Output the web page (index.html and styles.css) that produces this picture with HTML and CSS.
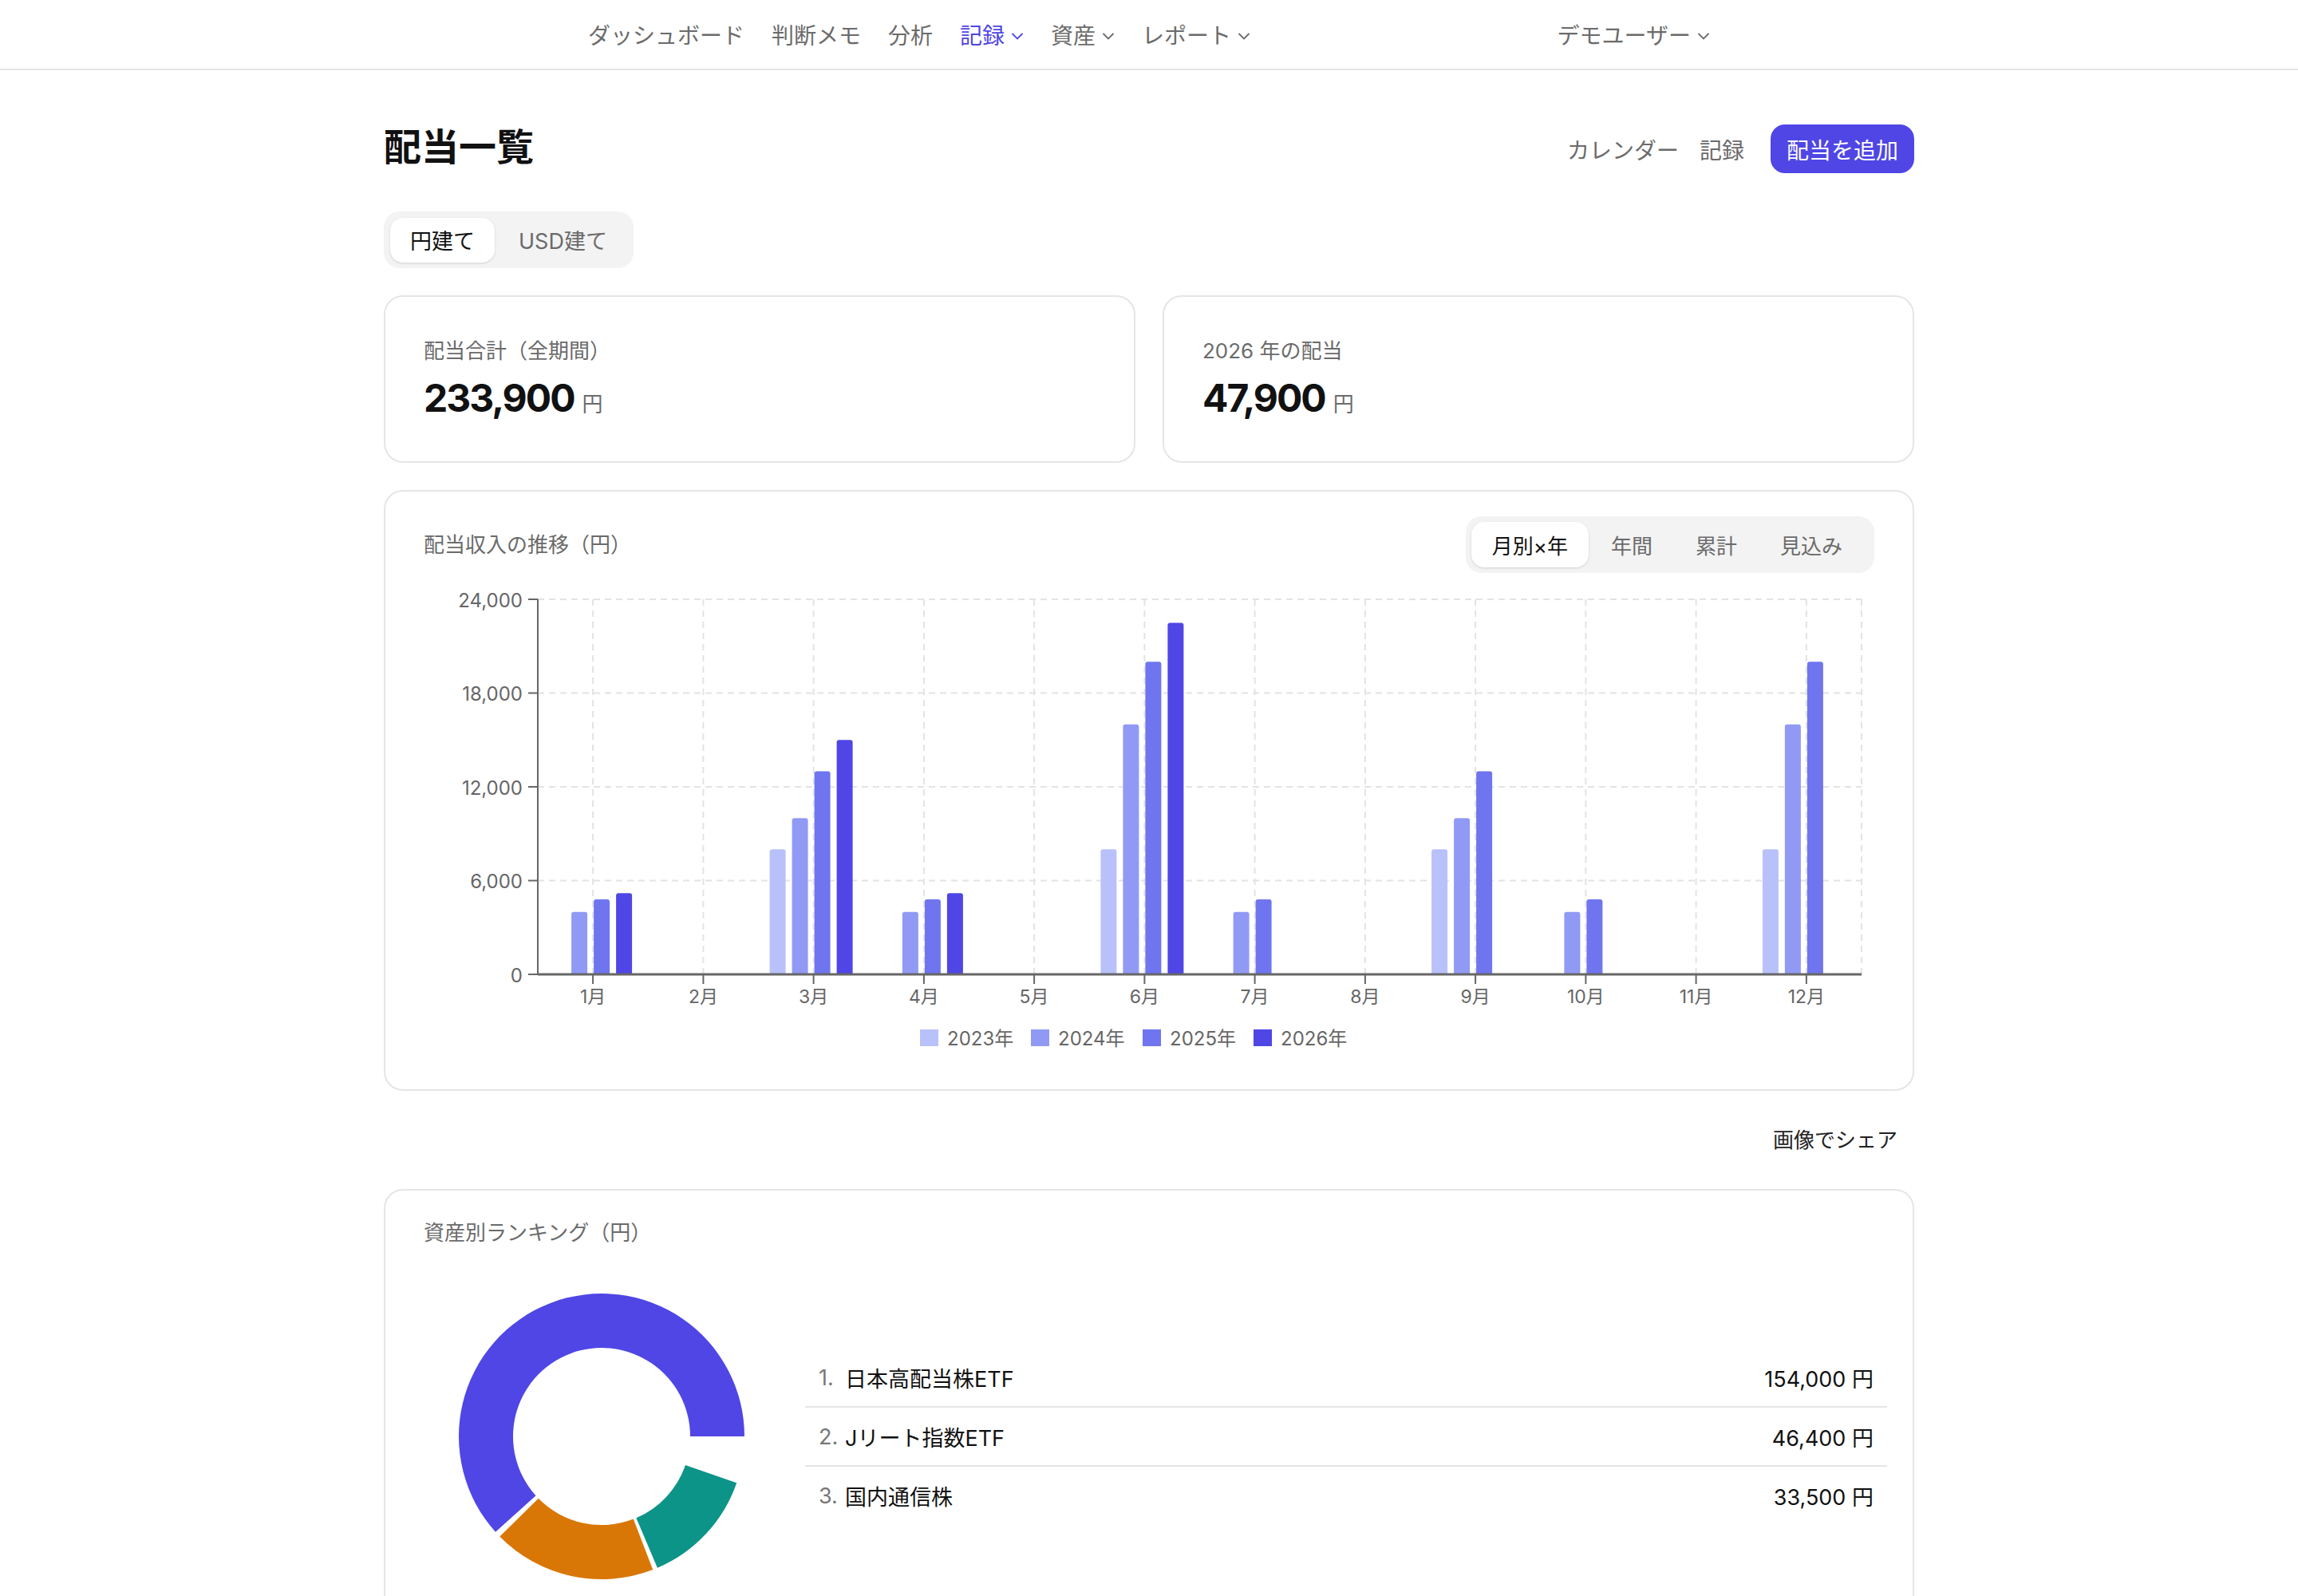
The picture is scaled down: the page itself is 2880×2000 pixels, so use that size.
FILE: index.html
```html
<!DOCTYPE html>
<html lang="ja">
<head>
    <meta charset="UTF-8">
    <meta name="viewport" content="width=device-width, initial-scale=1.0">
    <title>配当一覧</title>
    <link rel="stylesheet" href="styles.css">
</head>
<body>
    <header class="site-header">
        <div class="header-inner">
            <nav class="main-nav">
                <a href="#">ダッシュボード</a>
                <a href="#">判断メモ</a>
                <a href="#">分析</a>
                <a href="#" class="active">記録<svg class="chev" viewBox="0 0 16 10"><path d="M1.5 2l6.5 6.5 6.5-6.5"/></svg></a>
                <a href="#">資産<svg class="chev" viewBox="0 0 16 10"><path d="M1.5 2l6.5 6.5 6.5-6.5"/></svg></a>
                <a href="#">レポート<svg class="chev" viewBox="0 0 16 10"><path d="M1.5 2l6.5 6.5 6.5-6.5"/></svg></a>
            </nav>
            <div class="user-menu">デモユーザー<svg class="chev" viewBox="0 0 16 10"><path d="M1.5 2l6.5 6.5 6.5-6.5"/></svg></div>
        </div>
    </header>

    <main class="page">
        <div class="title-row">
            <h1 class="page-title">配当一覧</h1>
            <div class="title-actions">
                <a href="#" class="text-link">カレンダー</a>
                <a href="#" class="text-link">記録</a>
                <button class="primary-btn">配当を追加</button>
            </div>
        </div>

        <div class="seg currency-seg">
            <span class="seg-item active">円建て</span>
            <span class="seg-item">USD建て</span>
        </div>

        <div class="stat-grid">
            <div class="card stat-card">
                <div class="stat-label">配当合計（全期間）</div>
                <div class="stat-value">233,900<span class="unit">円</span></div>
            </div>
            <div class="card stat-card">
                <div class="stat-label">2026 年の配当</div>
                <div class="stat-value">47,900<span class="unit">円</span></div>
            </div>
        </div>

        <!-- 配当収入の推移 -->
        <section class="card chart-card">
            <div class="card-head">
                <h2 class="card-title">配当収入の推移（円）</h2>
                <div class="seg chart-seg">
                    <span class="seg-item active">月別×年</span>
                    <span class="seg-item">年間</span>
                    <span class="seg-item">累計</span>
                    <span class="seg-item">見込み</span>
                </div>
            </div>
            <svg class="chart" width="1818" height="600" viewBox="2 0 1818 600">
                <defs>
                    <clipPath id="plot"><rect x="0" y="0" width="1900" height="492"/></clipPath>
                </defs>
                <g class="grid">
                    <line x1="145" y1="22" x2="1804" y2="22"/>
                    <line x1="145" y1="139.5" x2="1804" y2="139.5"/>
                    <line x1="145" y1="257" x2="1804" y2="257"/>
                    <line x1="145" y1="374.5" x2="1804" y2="374.5"/>
                    <line x1="214.1" y1="22" x2="214.1" y2="492"/>
                    <line x1="352.4" y1="22" x2="352.4" y2="492"/>
                    <line x1="490.6" y1="22" x2="490.6" y2="492"/>
                    <line x1="628.9" y1="22" x2="628.9" y2="492"/>
                    <line x1="767.1" y1="22" x2="767.1" y2="492"/>
                    <line x1="905.4" y1="22" x2="905.4" y2="492"/>
                    <line x1="1043.6" y1="22" x2="1043.6" y2="492"/>
                    <line x1="1181.9" y1="22" x2="1181.9" y2="492"/>
                    <line x1="1320.1" y1="22" x2="1320.1" y2="492"/>
                    <line x1="1458.4" y1="22" x2="1458.4" y2="492"/>
                    <line x1="1596.6" y1="22" x2="1596.6" y2="492"/>
                    <line x1="1734.9" y1="22" x2="1734.9" y2="492"/>
                    <line x1="1804" y1="22" x2="1804" y2="492"/>
                </g>
                <g clip-path="url(#plot)">
                    <g transform="translate(159.1,0)">
                        <rect class="y24" x="28" y="413.7" width="20" height="82.3" rx="3"/>
                        <rect class="y25" x="56" y="398" width="20" height="98" rx="3"/>
                        <rect class="y26" x="84" y="390.2" width="20" height="105.8" rx="3"/>
                    </g>
                    <g transform="translate(435.6,0)">
                        <rect class="y23" x="0" y="335.3" width="20" height="160.7" rx="3"/>
                        <rect class="y24" x="28" y="296.2" width="20" height="199.8" rx="3"/>
                        <rect class="y25" x="56" y="237.4" width="20" height="258.6" rx="3"/>
                        <rect class="y26" x="84" y="198.3" width="20" height="297.7" rx="3"/>
                    </g>
                    <g transform="translate(573.9,0)">
                        <rect class="y24" x="28" y="413.7" width="20" height="82.3" rx="3"/>
                        <rect class="y25" x="56" y="398" width="20" height="98" rx="3"/>
                        <rect class="y26" x="84" y="390.2" width="20" height="105.8" rx="3"/>
                    </g>
                    <g transform="translate(850.4,0)">
                        <rect class="y23" x="0" y="335.3" width="20" height="160.7" rx="3"/>
                        <rect class="y24" x="28" y="178.7" width="20" height="317.3" rx="3"/>
                        <rect class="y25" x="56" y="100.3" width="20" height="395.7" rx="3"/>
                        <rect class="y26" x="84" y="51.4" width="20" height="444.6" rx="3"/>
                    </g>
                    <g transform="translate(988.6,0)">
                        <rect class="y24" x="28" y="413.7" width="20" height="82.3" rx="3"/>
                        <rect class="y25" x="56" y="398" width="20" height="98" rx="3"/>
                    </g>
                    <g transform="translate(1265.1,0)">
                        <rect class="y23" x="0" y="335.3" width="20" height="160.7" rx="3"/>
                        <rect class="y24" x="28" y="296.2" width="20" height="199.8" rx="3"/>
                        <rect class="y25" x="56" y="237.4" width="20" height="258.6" rx="3"/>
                    </g>
                    <g transform="translate(1403.4,0)">
                        <rect class="y24" x="28" y="413.7" width="20" height="82.3" rx="3"/>
                        <rect class="y25" x="56" y="398" width="20" height="98" rx="3"/>
                    </g>
                    <g transform="translate(1679.9,0)">
                        <rect class="y23" x="0" y="335.3" width="20" height="160.7" rx="3"/>
                        <rect class="y24" x="28" y="178.7" width="20" height="317.3" rx="3"/>
                        <rect class="y25" x="56" y="100.3" width="20" height="395.7" rx="3"/>
                    </g>
                </g>
                <g class="axis">
                    <line x1="145" y1="22" x2="145" y2="492"/>
                    <line x1="133" y1="22" x2="145" y2="22"/>
                    <line x1="133" y1="139.5" x2="145" y2="139.5"/>
                    <line x1="133" y1="257" x2="145" y2="257"/>
                    <line x1="133" y1="374.5" x2="145" y2="374.5"/>
                    <line x1="133" y1="492" x2="145" y2="492"/>
                    <line class="x-line" x1="145" y1="492" x2="1804" y2="492"/>
                    <line x1="214.1" y1="492" x2="214.1" y2="504"/>
                    <line x1="352.4" y1="492" x2="352.4" y2="504"/>
                    <line x1="490.6" y1="492" x2="490.6" y2="504"/>
                    <line x1="628.9" y1="492" x2="628.9" y2="504"/>
                    <line x1="767.1" y1="492" x2="767.1" y2="504"/>
                    <line x1="905.4" y1="492" x2="905.4" y2="504"/>
                    <line x1="1043.6" y1="492" x2="1043.6" y2="504"/>
                    <line x1="1181.9" y1="492" x2="1181.9" y2="504"/>
                    <line x1="1320.1" y1="492" x2="1320.1" y2="504"/>
                    <line x1="1458.4" y1="492" x2="1458.4" y2="504"/>
                    <line x1="1596.6" y1="492" x2="1596.6" y2="504"/>
                    <line x1="1734.9" y1="492" x2="1734.9" y2="504"/>
                </g>
                <g class="y-labels">
                    <text x="126" y="23">24,000</text>
                    <text x="126" y="140.5">18,000</text>
                    <text x="126" y="258">12,000</text>
                    <text x="126" y="375.5">6,000</text>
                    <text x="126" y="493">0</text>
                </g>
                <g class="x-labels">
                    <text x="214.1" y="520">1月</text>
                    <text x="352.4" y="520">2月</text>
                    <text x="490.6" y="520">3月</text>
                    <text x="628.9" y="520">4月</text>
                    <text x="767.1" y="520">5月</text>
                    <text x="905.4" y="520">6月</text>
                    <text x="1043.6" y="520">7月</text>
                    <text x="1181.9" y="520">8月</text>
                    <text x="1320.1" y="520">9月</text>
                    <text x="1458.4" y="520">10月</text>
                    <text x="1596.6" y="520">11月</text>
                    <text x="1734.9" y="520">12月</text>
                </g>
                <g class="legend">
                    <rect class="y23" x="624" y="561" width="23" height="21"/>
                    <text x="658" y="572">2023年</text>
                    <rect class="y24" x="763" y="561" width="23" height="21"/>
                    <text x="797" y="572">2024年</text>
                    <rect class="y25" x="903" y="561" width="23" height="21"/>
                    <text x="937" y="572">2025年</text>
                    <rect class="y26" x="1042" y="561" width="23" height="21"/>
                    <text x="1076" y="572">2026年</text>
                </g>
            </svg>
        </section>

        <div class="share-row">
            <button class="share-btn">画像でシェア</button>
        </div>

        <!-- 資産別ランキング -->
        <section class="card rank-card">
            <h2 class="card-title">資産別ランキング（円）</h2>
            <div class="rank-body">
                <div class="donut-box">
                    <svg width="446" height="400" viewBox="0 0 446 400">
                        <path class="d1" d="M402 200 A179 179 0 1 0 90 319.8 L140.5 274.3 A111 111 0 1 1 334 200 Z"/>
                        <path class="d2" d="M95.3 325.5 A179 179 0 0 0 287.2 367.1 L262.8 303.6 A111 111 0 0 1 143.8 277.8 Z"/>
                        <path class="d3" d="M292.9 364.8 A179 179 0 0 0 392.2 258.3 L328 236.1 A111 111 0 0 1 266.4 302.2 Z"/>
                    </svg>
                </div>
                <ol class="rank-list">
                    <li class="rank-row"><span class="rank-no">1.</span><span class="rank-name">日本高配当株ETF</span><span class="rank-val">154,000 円</span></li>
                    <li class="rank-row"><span class="rank-no">2.</span><span class="rank-name">Jリート指数ETF</span><span class="rank-val">46,400 円</span></li>
                    <li class="rank-row"><span class="rank-no">3.</span><span class="rank-name">国内通信株</span><span class="rank-val">33,500 円</span></li>
                </ol>
            </div>
        </section>
    </main>
</body>
</html>
```

FILE: styles.css
```css
body {
    margin: 0;
    background: #ffffff;
    color: #111111;
    font-family: Inter, "Noto Sans CJK JP", sans-serif;
}

/* ヘッダー */
.site-header {
    border-bottom: 2px solid #e5e5e5;
}
.header-inner {
    width: 1406px;
    height: 86px;
    margin: 0 auto;
    display: flex;
    align-items: center;
    justify-content: space-between;
}
.main-nav {
    display: flex;
    gap: 34px;
}
.main-nav a,
.user-menu {
    display: flex;
    align-items: center;
    gap: 8px;
    font-size: 28px;
    color: #6b6b6b;
    text-decoration: none;
}
.main-nav a.active {
    color: #4f46e5;
}
.chev {
    width: 16px;
    height: 10px;
    margin-top: 3px;
    fill: none;
    stroke: currentColor;
    stroke-width: 1.8;
}

/* ページ */
.page {
    width: 1918px;
    margin: 0 auto;
    padding-top: 68px;
}
.title-row {
    display: flex;
    align-items: center;
    justify-content: space-between;
    height: 61px;
}
.page-title {
    margin: 0 0 6px;
    font-size: 47px;
    line-height: 56px;
    font-weight: 700;
    color: #111;
}
.title-actions {
    display: flex;
    align-items: center;
    gap: 26px;
}
.text-link {
    font-size: 28px;
    color: #6b6b6b;
    text-decoration: none;
}
.primary-btn {
    margin-left: 7px;
    height: 61px;
    padding: 0 20px;
    border: none;
    border-radius: 18px;
    background: #4f46e5;
    color: #fff;
    font-family: inherit;
    font-size: 28px;
}

/* セグメント */
.seg {
    display: inline-flex;
    align-items: center;
    gap: 5px;
    padding: 8px;
    background: #f3f3f3;
    border-radius: 20px;
    box-sizing: border-box;
    height: 71px;
}
.seg-item {
    display: flex;
    align-items: center;
    height: 56px;
    padding: 0 25px;
    border-radius: 16px;
    font-size: 27px;
    color: #6b6b6b;
}
.seg-item.active {
    background: #fff;
    color: #111;
    box-shadow: 0 1px 3px rgba(0, 0, 0, 0.14);
}
.currency-seg {
    margin-top: 48px;
}
.chart-seg {
    gap: 2px;
    padding: 7px 14px 7px 7px;
}
.chart-seg .seg-item {
    height: 57px;
    padding: 0 26px;
    font-size: 26px;
}

/* カード */
.card {
    border: 2px solid #e5e5e5;
    border-radius: 24px;
    background: #fff;
}
.stat-grid {
    display: grid;
    grid-template-columns: 1fr 1fr;
    gap: 34px;
    margin-top: 34px;
}
.stat-card {
    height: 210px;
    box-sizing: border-box;
    padding: 50px 48px 0;
}
.stat-label {
    font-size: 26px;
    line-height: 36px;
    color: #6b6b6b;
}
.stat-value {
    margin-top: 13px;
    font-size: 48px;
    line-height: 56px;
    font-weight: 700;
    letter-spacing: -2px;
}
.stat-value .unit {
    margin-left: 10px;
    font-size: 26px;
    font-weight: 400;
    letter-spacing: 0;
    color: #6b6b6b;
}
.card-title {
    margin: 0;
    font-size: 26px;
    line-height: 36px;
    font-weight: 400;
    color: #6b6b6b;
}

/* グラフ */
.chart-card {
    margin-top: 34px;
    padding: 31px 48px 36px;
}
.card-head {
    display: flex;
    align-items: center;
    justify-content: space-between;
}
.chart {
    display: block;
    margin-top: 11px;
    font-family: Inter, "Noto Sans CJK JP", sans-serif;
}
.grid line {
    stroke: #e3e3e3;
    stroke-width: 2;
    stroke-dasharray: 8 6;
}
.axis line {
    stroke: #666;
    stroke-width: 2;
}
.axis .x-line {
    stroke-width: 3;
}
.y-labels text {
    font-size: 24px;
    fill: #666;
    text-anchor: end;
    dominant-baseline: central;
}
.x-labels text {
    font-size: 23px;
    fill: #666;
    text-anchor: middle;
    dominant-baseline: central;
}
.legend text {
    font-size: 24px;
    fill: #666;
    dominant-baseline: central;
}
.y23 { fill: #b9c1fb; }
.y24 { fill: #909af5; }
.y25 { fill: #6f75ef; }
.y26 { fill: #4f46e5; }

/* シェア */
.share-row {
    display: flex;
    justify-content: flex-end;
    margin: 29px 0 34px;
}
.share-btn {
    height: 60px;
    padding: 0 21px;
    border: none;
    background: none;
    font-family: inherit;
    font-size: 26px;
    color: #222;
}

/* ランキング */
.rank-card {
    padding: 35px 32px 48px 48px;
}
.rank-body {
    display: flex;
    align-items: center;
    gap: 32px;
    margin-top: 37px;
}
.donut-box {
    width: 446px;
    height: 400px;
}
.donut-box svg {
    display: block;
}
.d1 { fill: #4f46e5; }
.d2 { fill: #d97706; }
.d3 { fill: #0d9488; }
.rank-list {
    flex: 1;
    margin: 0;
    padding: 0;
    list-style: none;
}
.rank-row {
    display: flex;
    align-items: center;
    height: 72px;
    padding: 0 17px;
    font-size: 27px;
    color: #111;
}
.rank-row + .rank-row {
    border-top: 2px solid #e5e5e5;
}
.rank-no {
    width: 33px;
    color: #777;
}
.rank-name {
    flex: 1;
}
.rank-val {
    color: #111;
}
```
